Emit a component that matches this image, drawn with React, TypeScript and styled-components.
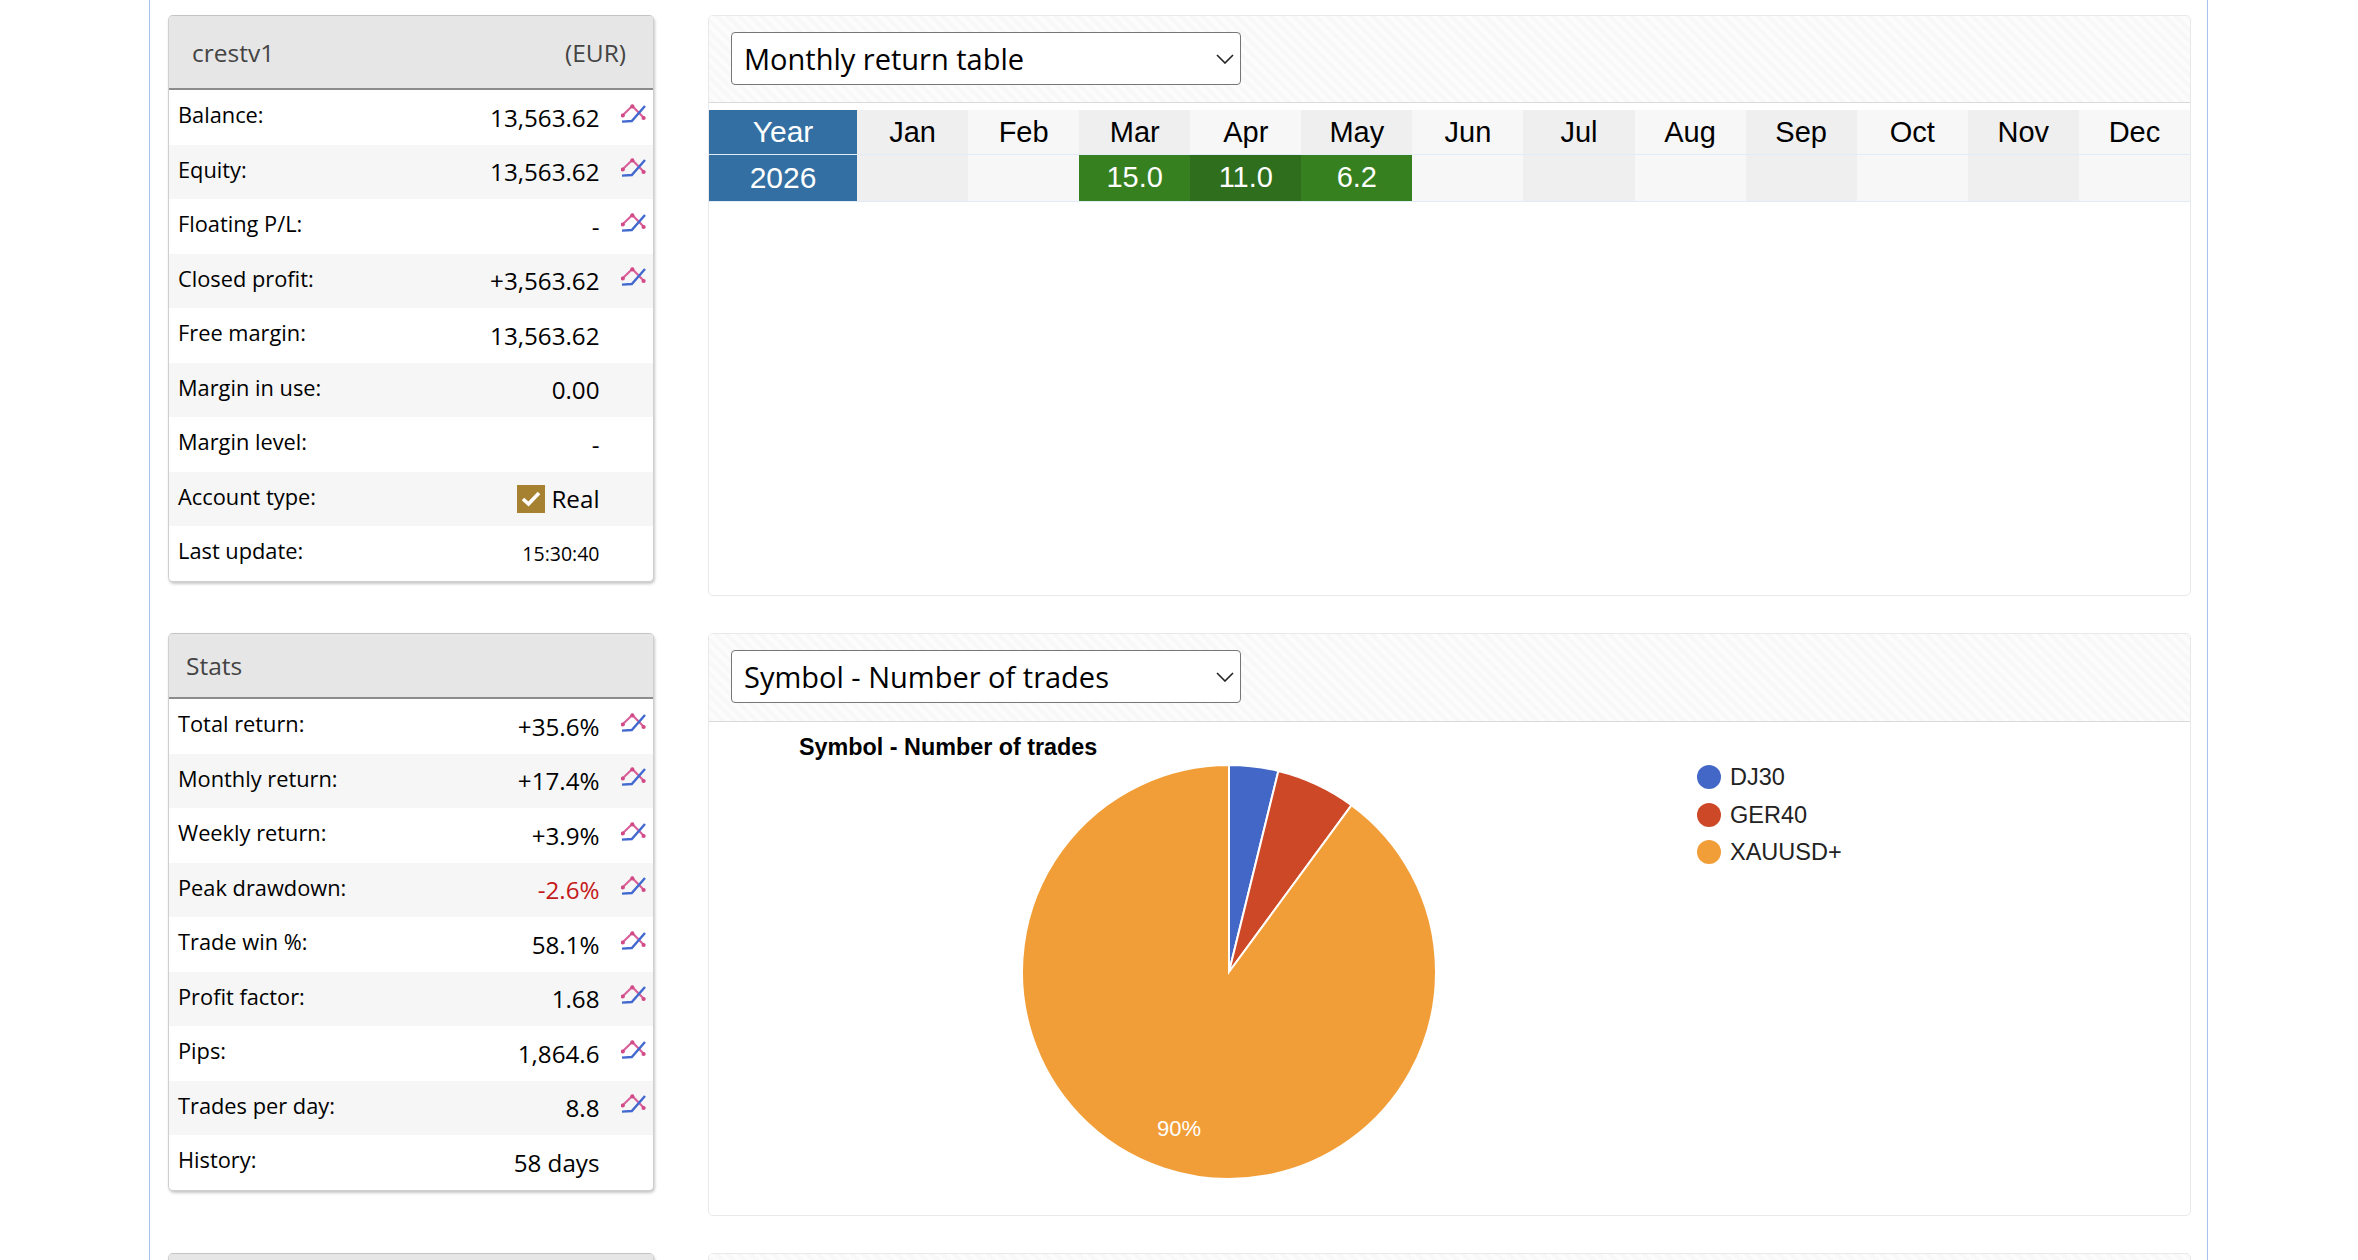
import React from 'react';
import styled, { createGlobalStyle } from 'styled-components';

const GlobalStyle = createGlobalStyle`
  html, body {
    margin: 0;
    padding: 0;
    height: 1260px;
    overflow: hidden;
    background: #fff;
    font-family: "Open Sans", "Noto Sans", sans-serif;
  }
`;

const Page = styled.div`
  box-sizing: border-box;
  width: 2059px;
  height: 1260px;
  margin-left: 149px;
  border-left: 1px solid #a9c3ee;
  border-right: 1px solid #a9c3ee;
  padding: 15px 16px 0 18px;
  overflow: hidden;
`;

const Layout = styled.div`
  display: grid;
  grid-template-columns: 486px 1fr;
  column-gap: 54px;
  row-gap: 37px;
  align-items: start;
`;

const Card = styled.section`
  background: #fff;
  border: 1px solid #cfcfcf;
  border-top-color: #c4c4c4;
  border-radius: 5px;
  box-shadow: 1px 2px 3px rgba(0, 0, 0, 0.22);
  overflow: hidden;
`;

const CardHeader = styled.header<{ $tall?: boolean; $indent: number }>`
  display: flex;
  align-items: center;
  justify-content: space-between;
  box-sizing: border-box;
  height: ${(p) => (p.$tall ? 74 : 65)}px;
  padding: 0 27px 0 ${(p) => p.$indent}px;
  background: #e6e6e6;
  border-bottom: 2px solid #8c8c8c;
  color: #444;
  font-size: 24.5px;
`;

const Row = styled.div`
  display: flex;
  align-items: center;
  height: 54.5px;
  padding-left: 9px;
  color: #000;
  &:nth-child(odd) {
    background: #f6f6f6;
  }
`;

const Label = styled.span`
  flex: 1;
  font-size: 21.8px;
  padding-bottom: 5px;
`;

const Value = styled.span<{ $negative?: boolean; $small?: boolean }>`
  display: flex;
  align-items: center;
  gap: 6px;
  font-size: ${(p) => (p.$small ? 19.5 : 24.2)}px;
  color: ${(p) => (p.$negative ? '#c41a1a' : '#000')};
`;

const IconSlot = styled.span`
  display: flex;
  box-sizing: border-box;
  width: 53.5px;
  padding: 0 0 7px 21.5px;
`;

const CheckBox = styled.span`
  display: inline-flex;
  align-items: center;
  justify-content: center;
  width: 28px;
  height: 28px;
  background: #a68132;
`;

const Panel = styled.section<{ $height: number }>`
  box-sizing: border-box;
  height: ${(p) => p.$height}px;
  background: #fff;
  border: 1px solid #e9e9e9;
  border-radius: 5px;
  overflow: hidden;
`;

const PanelHeader = styled.header<{ $tall?: boolean }>`
  box-sizing: border-box;
  height: ${(p) => (p.$tall ? 88 : 87)}px;
  padding: 16px 22px;
  background: repeating-linear-gradient(45deg, #f8f8f8 0 4px, #fcfcfc 4px 8px);
  border-bottom: 1px solid #d9d9d9;
`;

const SelectWrap = styled.div`
  position: relative;
  width: 510px;
  height: 53px;
`;

const Select = styled.select`
  appearance: none;
  box-sizing: border-box;
  width: 100%;
  height: 100%;
  padding: 0 40px 0 12px;
  background: #fff;
  border: 1px solid #767676;
  border-radius: 4px;
  color: #000;
  font-family: "Open Sans", "Noto Sans", sans-serif;
  font-size: 29px;
`;

const Chevron = styled.svg`
  position: absolute;
  top: 22px;
  right: 7px;
  width: 18px;
  height: 10px;
  pointer-events: none;
`;

const ReturnTable = styled.table`
  width: 100%;
  margin-top: 7px;
  border-collapse: collapse;
  table-layout: fixed;
  font-family: "Liberation Sans", Arial, sans-serif;
  font-size: 29px;
  text-align: center;
  thead th {
    height: 44px;
  }
  tbody td,
  tbody th {
    height: 45px;
    padding-bottom: 1px;
  }
`;

const YearCell = styled.th`
  width: 148px;
  padding: 0;
  background: #336fa3;
  color: #fff;
  font-size: 30px;
  font-weight: 400;
  border-bottom: 1px solid #e2ecf9;
`;

const MonthCell = styled.td<{ $index: number; $green?: 'light' | 'dark' }>`
  padding: 0;
  border-bottom: 1px solid #e2ecf9;
  color: ${(p) => (p.$green ? '#fff' : '#000')};
  font-weight: 400;
  background: ${(p) => {
    if (p.$green === 'light') return '#37801f';
    if (p.$green === 'dark') return '#2f6e1c';
    return p.$index % 2 === 0 ? '#efefef' : '#f7f7f7';
  }};
`;

const ChartSvg = styled.svg`
  display: block;
  width: 100%;
  height: 492px;
  font-family: "Liberation Sans", Arial, sans-serif;
`;

const TrendIcon: React.FC = () => (
  <svg width="25" height="20" viewBox="0 0 25 20" fill="none">
    <path d="M1.4 11.5 L11.3 2 L23 14" stroke="#d9609a" strokeWidth="2.2" />
    <circle cx="1.8" cy="11.5" r="2.1" fill="#d24a86" />
    <circle cx="11.3" cy="2.4" r="2.1" fill="#d24a86" />
    <circle cx="22.6" cy="14" r="2.1" fill="#d24a86" />
    <path d="M1 17.6 L10.8 17 L24 2" stroke="#4169cf" strokeWidth="2.4" />
  </svg>
);

const rowsAccount = [
  { label: 'Balance:', value: '13,563.62', icon: true },
  { label: 'Equity:', value: '13,563.62', icon: true },
  { label: 'Floating P/L:', value: '-', icon: true },
  { label: 'Closed profit:', value: '+3,563.62', icon: true },
  { label: 'Free margin:', value: '13,563.62' },
  { label: 'Margin in use:', value: '0.00' },
  { label: 'Margin level:', value: '-' },
];

const rowsStats = [
  { label: 'Total return:', value: '+35.6%', icon: true },
  { label: 'Monthly return:', value: '+17.4%', icon: true },
  { label: 'Weekly return:', value: '+3.9%', icon: true },
  { label: 'Peak drawdown:', value: '-2.6%', icon: true, negative: true },
  { label: 'Trade win %:', value: '58.1%', icon: true },
  { label: 'Profit factor:', value: '1.68', icon: true },
  { label: 'Pips:', value: '1,864.6', icon: true },
  { label: 'Trades per day:', value: '8.8', icon: true },
  { label: 'History:', value: '58 days' },
];

const months = ['Jan', 'Feb', 'Mar', 'Apr', 'May', 'Jun', 'Jul', 'Aug', 'Sep', 'Oct', 'Nov', 'Dec'];

const returns: Record<string, { text: string; green: 'light' | 'dark' }> = {
  Mar: { text: '15.0', green: 'light' },
  Apr: { text: '11.0', green: 'dark' },
  May: { text: '6.2', green: 'light' },
};

type StatRowProps = { label: string; value: string; icon?: boolean; negative?: boolean };

const StatRow: React.FC<StatRowProps> = ({ label, value, icon, negative }) => (
  <Row>
    <Label>{label}</Label>
    <Value $negative={negative}>{value}</Value>
    <IconSlot>{icon && <TrendIcon />}</IconSlot>
  </Row>
);

const PanelSelect: React.FC<{ title: string }> = ({ title }) => (
  <SelectWrap>
    <Select defaultValue={title}>
      <option>{title}</option>
    </Select>
    <Chevron viewBox="0 0 18 10" fill="none">
      <path d="M1 1 L9 9 L17 1" stroke="#222" strokeWidth="1.6" />
    </Chevron>
  </SelectWrap>
);

const cx = 520;
const cy = 250;
const r = 207;

const slicePath = (fromDeg: number, toDeg: number) => {
  const a = (fromDeg * Math.PI) / 180;
  const b = (toDeg * Math.PI) / 180;
  const large = toDeg - fromDeg > 180 ? 1 : 0;
  return `M${cx} ${cy} L${cx + r * Math.sin(a)} ${cy - r * Math.cos(a)} A${r} ${r} 0 ${large} 1 ${cx + r * Math.sin(b)} ${cy - r * Math.cos(b)} Z`;
};

const slices = [
  { from: 0, to: 13.8, color: '#4267c6' },
  { from: 13.8, to: 36.3, color: '#cc4827' },
  { from: 36.3, to: 360, color: '#f29e38' },
];

const legend = [
  { name: 'DJ30', color: '#4267c6', y: 55 },
  { name: 'GER40', color: '#cc4827', y: 93 },
  { name: 'XAUUSD+', color: '#f29e38', y: 130 },
];

const App: React.FC = () => (
  <>
    <GlobalStyle />
    <Page>
      <Layout>
        <Card>
          <CardHeader $tall $indent={23}>
            <span>crestv1</span>
            <span>(EUR)</span>
          </CardHeader>
          {rowsAccount.map((row) => (
            <StatRow key={row.label} {...row} />
          ))}
          <Row>
            <Label>Account type:</Label>
            <Value>
              <CheckBox>
                <svg width="20" height="17" viewBox="0 0 20 17" fill="none">
                  <path d="M2 9 L7.5 14 L18 3" stroke="#fff" strokeWidth="3.6" />
                </svg>
              </CheckBox>
              Real
            </Value>
            <IconSlot />
          </Row>
          <Row>
            <Label>Last update:</Label>
            <Value $small>15:30:40</Value>
            <IconSlot />
          </Row>
        </Card>

        <Panel $height={581}>
          <PanelHeader>
            <PanelSelect title="Monthly return table" />
          </PanelHeader>
          <ReturnTable>
            <thead>
              <tr>
                <YearCell>Year</YearCell>
                {months.map((m, i) => (
                  <MonthCell as="th" key={m} $index={i}>
                    {m}
                  </MonthCell>
                ))}
              </tr>
            </thead>
            <tbody>
              <tr>
                <YearCell>2026</YearCell>
                {months.map((m, i) => (
                  <MonthCell key={m} $index={i} $green={returns[m]?.green}>
                    {returns[m]?.text}
                  </MonthCell>
                ))}
              </tr>
            </tbody>
          </ReturnTable>
        </Panel>

        <Card>
          <CardHeader $indent={17}>
            <span>Stats</span>
          </CardHeader>
          {rowsStats.map((row) => (
            <StatRow key={row.label} {...row} />
          ))}
        </Card>

        <Panel $height={583}>
          <PanelHeader $tall>
            <PanelSelect title="Symbol - Number of trades" />
          </PanelHeader>
          <ChartSvg viewBox="0 0 1481 492">
            <text x="90" y="33" fontSize="23.35" fontWeight="700" fill="#000">
              Symbol - Number of trades
            </text>
            {slices.map((s) => (
              <path key={s.color} d={slicePath(s.from, s.to)} fill={s.color} stroke="#fff" strokeWidth="2" />
            ))}
            <text x="448" y="414" fontSize="22" fill="#fff">
              90%
            </text>
            {legend.map((item) => (
              <g key={item.name}>
                <circle cx="1000" cy={item.y} r="12" fill={item.color} />
                <text x="1021" y={item.y + 8} fontSize="23.5" fill="#222">
                  {item.name}
                </text>
              </g>
            ))}
          </ChartSvg>
        </Panel>

        <Card>
          <CardHeader $indent={17} />
        </Card>
        <Panel $height={120}>
          <PanelHeader />
        </Panel>
      </Layout>
    </Page>
  </>
);

export default App;
